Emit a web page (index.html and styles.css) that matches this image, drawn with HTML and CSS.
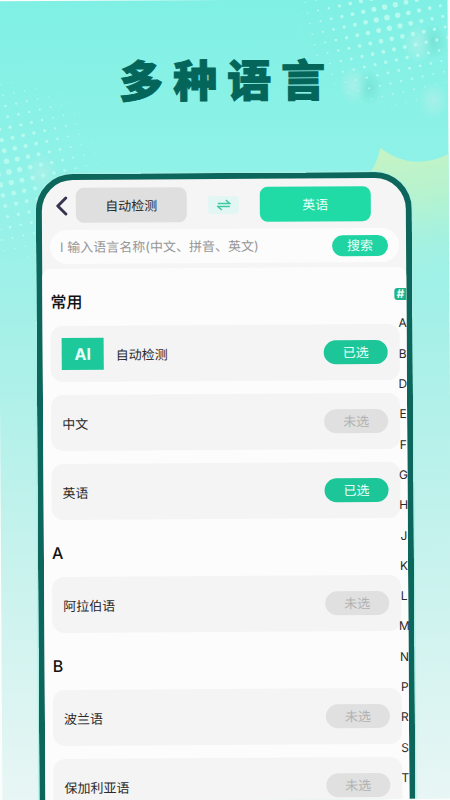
FILE: index.html
```html
<!DOCTYPE html>
<html lang="zh-CN">
<head>
<meta charset="utf-8">
<meta name="viewport" content="width=device-width, initial-scale=1">
<title>多种语言</title>
<link rel="stylesheet" href="styles.css">
</head>
<body>
<main class="poster">
  <svg class="backdrop" viewBox="0 0 450 800" preserveAspectRatio="xMidYMin slice" aria-hidden="true">
    <defs>
      <linearGradient id="leaf" gradientUnits="userSpaceOnUse" x1="395" y1="150" x2="425" y2="300">
        <stop offset="0" stop-color="#c6f3c4"/>
        <stop offset="0.35" stop-color="#b9f3cd" stop-opacity="0.9"/>
        <stop offset="1" stop-color="#a4f0e6" stop-opacity="0"/>
      </linearGradient>
      <radialGradient id="glow"><stop offset="0" stop-color="#aff0e9" stop-opacity="0.8"/><stop offset="1" stop-color="#aff0e9" stop-opacity="0"/></radialGradient>
      <radialGradient id="shade"><stop offset="0" stop-color="#74e0d3" stop-opacity="0.8"/><stop offset="1" stop-color="#74e0d3" stop-opacity="0"/></radialGradient>
    </defs>
    <path fill="url(#leaf)" d="M366 180Q378 168 382 149Q398 162 418 163Q436 163 452 154V310H366Z"/>
    <ellipse fill="url(#shade)" cx="371" cy="88" rx="13" ry="18"/>
    <ellipse fill="url(#glow)" cx="355" cy="86" rx="14" ry="19"/>
    <ellipse fill="url(#shade)" cx="435" cy="43" rx="14" ry="18"/>
    <ellipse fill="url(#glow)" cx="420" cy="45" rx="15" ry="20"/>
    <ellipse fill="url(#glow)" cx="435" cy="102" rx="15" ry="19"/>
    <ellipse fill="url(#glow)" cx="43" cy="172" rx="16" ry="20"/>
    <g id="dots" fill="#b6f9ee"></g>
  </svg>

  <h1 class="title">多种语言</h1>

  <section class="phone">
    <header class="top">
      <nav class="langs">
        <button class="back" type="button" aria-label="返回">
          <svg viewBox="0 0 12 20" width="12" height="20"><path d="M10 2L2 10L10 18" fill="none" stroke="#39344f" stroke-width="3" stroke-linecap="round" stroke-linejoin="round"/></svg>
        </button>
        <button class="tab" type="button">自动检测</button>
        <button class="swap" type="button" aria-label="互换">
          <svg viewBox="0 0 14 12" width="14" height="12"><path d="M1 4.5H13L9 1M13 7.5H1L5 11" fill="none" stroke="#3cc9a3" stroke-width="1.4"/></svg>
        </button>
        <button class="tab tab-on" type="button">英语</button>
      </nav>
      <form class="search">
        <input class="field" type="text" aria-label="搜索语言" placeholder="I 输入语言名称(中文、拼音、英文)">
        <button class="go" type="button">搜索</button>
      </form>
    </header>

    <div class="panel">
      <h2 class="group">常用</h2>
      <ul class="list">
        <li class="card"><span class="ai">AI</span><span class="name">自动检测</span><button class="pill pill-on" type="button">已选</button></li>
        <li class="card"><span class="name">中文</span><button class="pill" type="button">未选</button></li>
        <li class="card"><span class="name">英语</span><button class="pill pill-on" type="button">已选</button></li>
      </ul>
      <h2 class="group">A</h2>
      <ul class="list">
        <li class="card"><span class="name">阿拉伯语</span><button class="pill" type="button">未选</button></li>
      </ul>
      <h2 class="group">B</h2>
      <ul class="list">
        <li class="card"><span class="name">波兰语</span><button class="pill" type="button">未选</button></li>
        <li class="card"><span class="name">保加利亚语</span><button class="pill" type="button">未选</button></li>
      </ul>
      <nav class="index" aria-label="字母索引">
        <a class="hash" href="#">#</a><a href="#">A</a><a href="#">B</a><a href="#">D</a><a href="#">E</a><a href="#">F</a><a href="#">G</a><a href="#">H</a><a href="#">J</a><a href="#">K</a><a href="#">L</a><a href="#">M</a><a href="#">N</a><a href="#">P</a><a href="#">R</a><a href="#">S</a><a href="#">T</a>
      </nav>
    </div>
  </section>
</main>
<script src="dots.js"></script>
</body>
</html>
```
FILE: styles.css
```css
* { box-sizing: border-box; }

body {
  margin: 0;
  height: 100vh;
  overflow: hidden;
  background: #fbfdfd;
  font-family: Inter, "Noto Sans CJK SC", sans-serif;
  color: #2a2a2a;
}

button, input { font: inherit; color: inherit; border: 0; padding: 0; margin: 0; }
h1, h2, ul { margin: 0; padding: 0; }
ul { list-style: none; }
a { color: inherit; text-decoration: none; }

.poster {
  position: relative;
  display: flex;
  flex-direction: column;
  height: 100vh;
  overflow: hidden;
  background: linear-gradient(#80f0e4 0%, #90f2e8 22%, #a4f0e8 40%, #c3f2ec 66%, #e8f6f5 100%);
  transform: rotate(-0.35deg);
}

.backdrop {
  position: absolute;
  inset: 0;
  width: 100%;
  height: 100%;
}

.title {
  position: relative;
  padding: 49px 0 60px 8px;
  font-size: 44px;
  line-height: 64px;
  font-weight: 900;
  letter-spacing: 10px;
  text-align: center;
  color: #04655a;
  -webkit-text-stroke: 1px #04655a;
}

.phone {
  position: relative;
  flex: 1;
  min-height: 0;
  display: flex;
  flex-direction: column;
  margin: 0 37px;
  border: 6px solid #0d665b;
  border-bottom: 0;
  border-radius: 37px 37px 0 0;
  background: #f5f5f5;
  box-shadow: 0 0 1px 1px #a9efe5;
}

.top { padding: 8px 7px 5px 8px; }

.langs {
  display: flex;
  align-items: center;
  gap: 21px;
  padding: 0 6px;
}

.back {
  display: flex;
  margin-right: -13px;
  background: none;
}

.tab {
  width: 111px;
  height: 35px;
  border-radius: 8px;
  background: #dfdfdf;
  font-size: 13px;
}

.tab-on { background: #20dba6; color: #e9fff8; }

.swap {
  display: flex;
  align-items: center;
  justify-content: center;
  width: 31px;
  height: 18px;
  border-radius: 4px;
  background: #e2f7f3;
}

.search {
  display: flex;
  align-items: center;
  margin-top: 7px;
  padding: 0 11px 0 10px;
  height: 34px;
  border-radius: 17px;
  background: #fcfcfc;
}

.field {
  flex: 1;
  min-width: 0;
  background: none;
  font-size: 13px;
}

.field::placeholder { color: #979797; }

.go {
  width: 56px;
  height: 21px;
  border-radius: 11px;
  background: #20d3a2;
  font-size: 13px;
  line-height: 20px;
  color: #e9fff8;
}

.panel {
  position: relative;
  flex: 1;
  min-height: 0;
  padding: 0 7px 0 8px;
  border-radius: 8px 8px 0 0;
  background: #fcfcfc;
}

.group {
  padding: 17px 0 8px;
  font-size: 16px;
  line-height: 32px;
  font-weight: 500;
  color: #111;
}

.list { display: grid; gap: 13px; }

.card {
  display: flex;
  align-items: center;
  gap: 12px;
  height: 56px;
  padding: 0 12px 0 11px;
  border-radius: 12px;
  background: #f4f4f4;
}

.ai {
  width: 42px;
  height: 32px;
  background: #1dc89a;
  font-size: 16px;
  line-height: 32px;
  font-weight: 700;
  text-align: center;
  color: #eafff8;
}

.name { flex: 1; font-size: 13px; }

.pill {
  width: 64px;
  height: 24px;
  border-radius: 12px;
  background: #e0e0e0;
  font-size: 13px;
  line-height: 24px;
  color: #b2b2b2;
}

.pill-on { background: #1dc699; color: #e9fff8; }

.index {
  position: absolute;
  top: 21px;
  bottom: 14px;
  right: -4px;
  display: flex;
  flex-direction: column;
  justify-content: space-between;
  align-items: center;
  width: 16px;
  font-size: 12px;
  line-height: 14px;
}

.hash {
  align-self: flex-start;
  width: 12px;
  border-radius: 3px 0 0 3px;
  background: #1fb389;
  line-height: 12px;
  font-weight: 700;
  text-align: center;
  color: #eafff8;
}
```
FILE: dots.js
```js
// Halftone fields: dots on a tilted grid that shrink away from a centre.
const fields = [
  { x: 387, y: 8, cx: 392, cy: 18, size: 3, reach: 108 },
  { x: 8, y: 160, cx: 8, cy: 170, size: 3, reach: 108 }
];
const group = document.getElementById("dots");

for (const f of fields) {
  for (let i = -14; i <= 14; i++) {
    for (let j = -14; j <= 14; j++) {
      const x = f.x + i * 10.7 + j * 2.3;
      const y = f.y - i * 2.3 + j * 10.6;
      const r = f.size * (1 - Math.hypot(x - f.cx, y - f.cy) / f.reach);
      if (r < 0.2) continue;
      const dot = document.createElementNS("http://www.w3.org/2000/svg", "circle");
      dot.setAttribute("cx", x.toFixed(1));
      dot.setAttribute("cy", y.toFixed(1));
      dot.setAttribute("r", r.toFixed(2));
      group.append(dot);
    }
  }
}
```
